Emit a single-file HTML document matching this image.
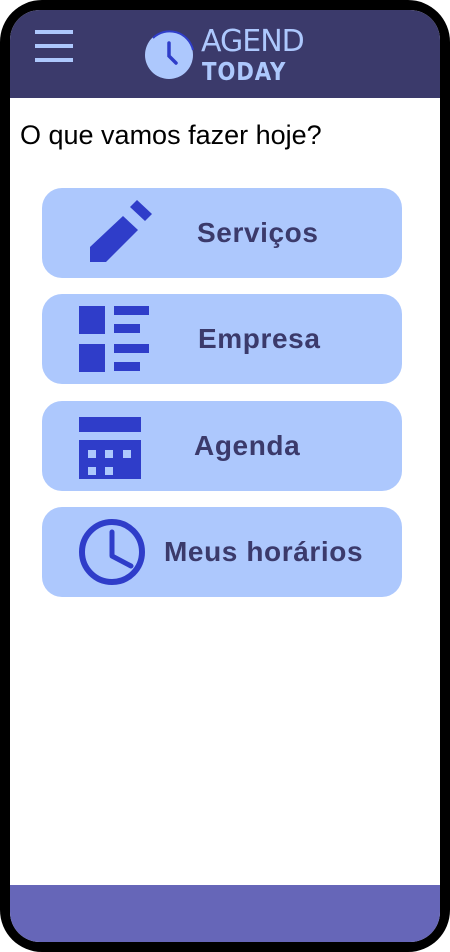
<!DOCTYPE html>
<html><head><meta charset="utf-8"><style>
html,body{margin:0;padding:0;background:#fff;}
body{width:450px;height:952px;position:relative;overflow:hidden;font-family:"Liberation Sans","DejaVu Sans",sans-serif;}
.frame{position:absolute;left:0;top:0;width:450px;height:952px;box-sizing:border-box;background:#000;border-radius:42px;}
.screen{position:absolute;left:10px;top:10px;width:430px;height:932px;background:#fff;border-radius:30px;overflow:hidden;}
.header{position:absolute;left:0;top:0;width:430px;height:88px;background:#3b3a6b;}
.footer{position:absolute;left:0;top:875px;width:430px;height:57px;background:#6666b8;}
.q{position:absolute;left:10px;top:110px;font-size:27px;color:#000;}
.btn{position:absolute;left:32px;width:360px;height:90px;background:#adc8fd;border-radius:20px;}
.btn span{position:absolute;font-weight:bold;font-size:28px;color:#3b3a6b;top:29px;letter-spacing:0.6px;}
.btn svg{position:absolute;left:0;top:0;}
.logo{position:absolute;color:#adc8fd;font-family:"DejaVu Sans",sans-serif;}
</style></head><body>
<div class="frame"></div>
<div class="screen">
 <div class="header">
  <div style="position:absolute;left:25px;top:20px;width:38px;height:4px;background:#adc8fd"></div>
  <div style="position:absolute;left:25px;top:34px;width:38px;height:4px;background:#adc8fd"></div>
  <div style="position:absolute;left:25px;top:48px;width:38px;height:4px;background:#adc8fd"></div>
  <svg style="position:absolute;left:134px;top:10px" width="60" height="60" viewBox="0 0 60 60">
   <circle cx="25" cy="35" r="24" fill="#adc8fd"/>
   <path d="M9 18 A24 24 0 0 1 49 30" fill="none" stroke="#2f3dc9" stroke-width="2"/>
   <path d="M25 23 L25 36 L32 43" fill="none" stroke="#2f3dc9" stroke-width="3.5" stroke-linecap="round"/>
  </svg>
  <div class="logo" style="left:191px;top:14px;font-size:30px;letter-spacing:-1px;">AGEND</div>
  <div class="logo" style="left:192px;top:47px;font-size:25px;font-weight:bold;letter-spacing:1px;transform:scaleX(0.85);transform-origin:left;">TODAY</div>
 </div>
 <div class="q">O que vamos fazer hoje?</div>

 <div class="btn" style="top:178px">
  <svg width="130" height="90"><path d="M48 74 L48 59 L81 28 L96 42 L64 74 Z" fill="#2f3dc9"/><path d="M88 19 L95 12 L110 26 L103 33 Z" fill="#2f3dc9"/></svg>
  <span style="left:155px">Serviços</span>
 </div>
 <div class="btn" style="top:284px">
  <svg width="130" height="90"><rect x="37" y="12" width="26" height="28" fill="#2f3dc9"/><rect x="37" y="50" width="26" height="28" fill="#2f3dc9"/><rect x="72" y="12" width="35" height="9" fill="#2f3dc9"/><rect x="72" y="30" width="26" height="9" fill="#2f3dc9"/><rect x="72" y="50" width="35" height="9" fill="#2f3dc9"/><rect x="72" y="68" width="26" height="9" fill="#2f3dc9"/></svg>
  <span style="left:156px">Empresa</span>
 </div>
 <div class="btn" style="top:391px">
  <svg width="130" height="90"><rect x="37" y="16" width="62" height="15" fill="#2f3dc9"/><rect x="37" y="39" width="62" height="39" fill="#2f3dc9"/>
   <g fill="#adc8fd"><rect x="46" y="49" width="8" height="8"/><rect x="63" y="49" width="8" height="8"/><rect x="81" y="49" width="8" height="8"/><rect x="46" y="66" width="8" height="8"/><rect x="63" y="66" width="8" height="8"/></g></svg>
  <span style="left:152px">Agenda</span>
 </div>
 <div class="btn" style="top:497px">
  <svg width="130" height="90"><circle cx="70" cy="45" r="30" fill="none" stroke="#2f3dc9" stroke-width="6"/><path d="M70 25 L70 49 L89 59" fill="none" stroke="#2f3dc9" stroke-width="5" stroke-linecap="round" stroke-linejoin="round"/></svg>
  <span style="left:122px">Meus horários</span>
 </div>
 <div class="footer"></div>
</div>
</body></html>
